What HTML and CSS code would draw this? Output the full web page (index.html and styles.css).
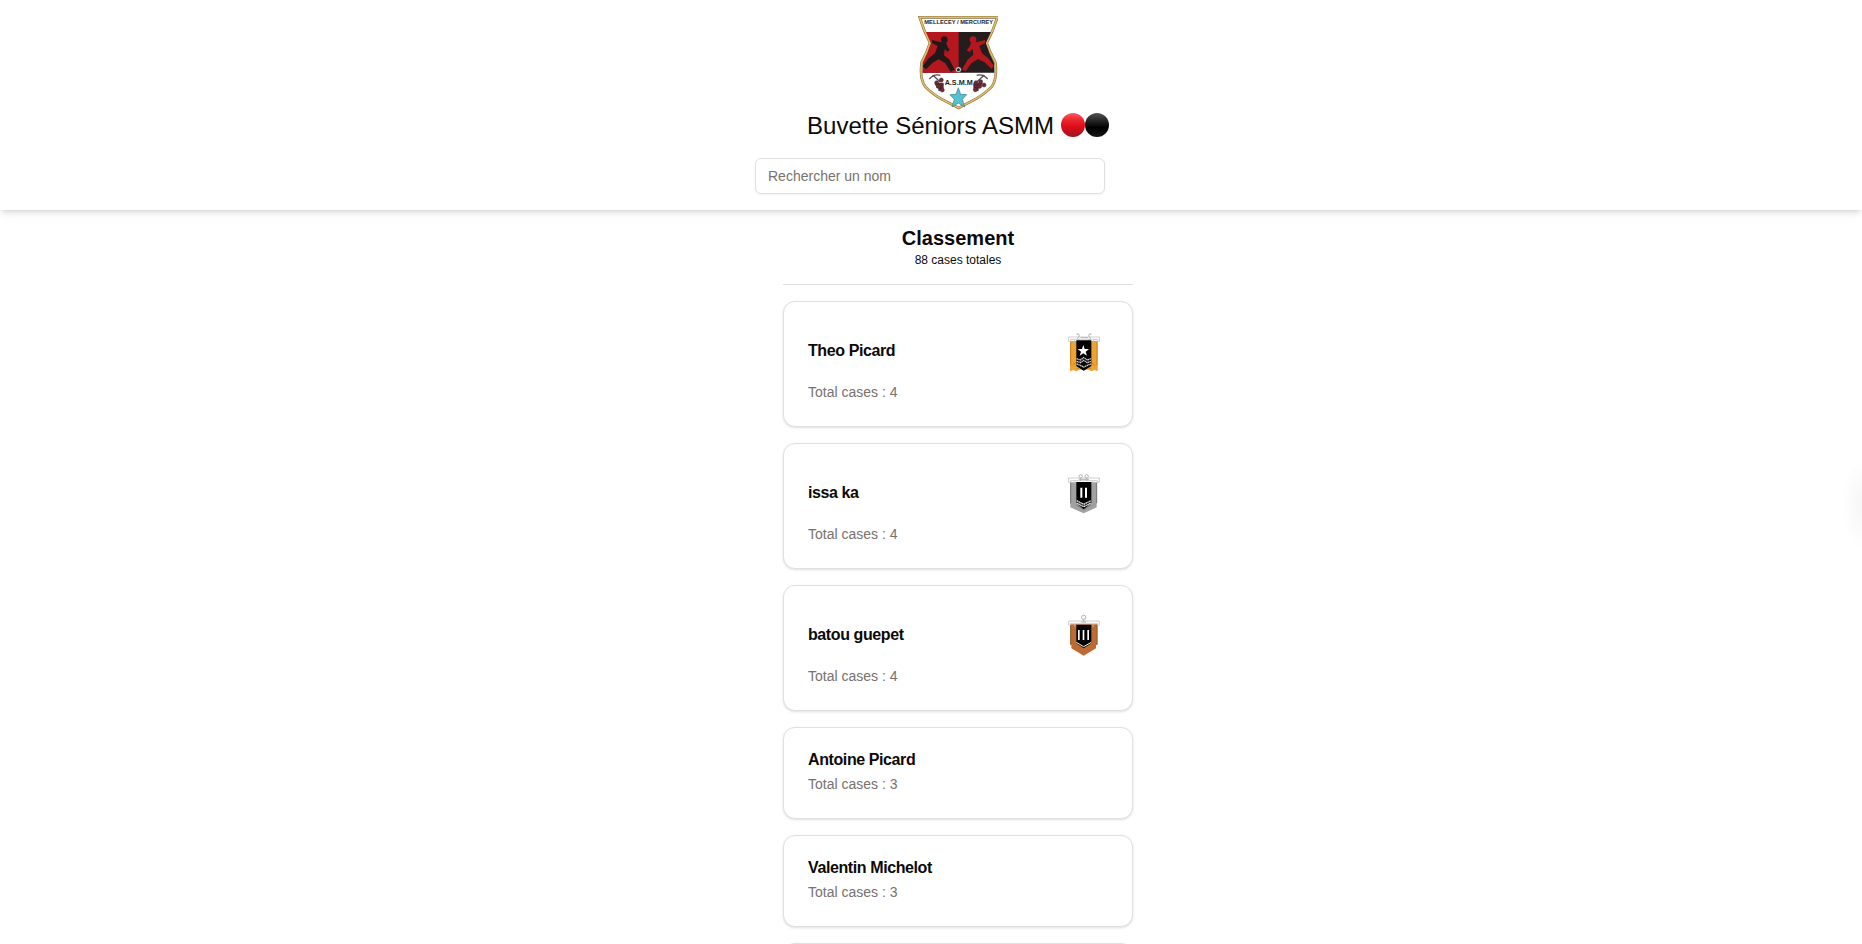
FILE: index.html
```
<!DOCTYPE html>
<html lang="fr">
<head>
<meta charset="utf-8">
<title>Buvette Séniors ASMM</title>
<link rel="stylesheet" href="styles.css">
</head>
<body>
<header class="header">
  <div class="brand">
    <svg class="crest" viewBox="24 18 240 282" role="img" aria-label="Logo ASMM">
      <path d="M29 22H262Q249 64 230 99Q240 128 256 157C260 185 256 213 246 229Q228 248 199 266L146 294 92 266Q63 248 45 229C34 213 31 185 35 157Q51 128 60 99Q42 64 29 22Z" fill="#fff" stroke="#8b7242" stroke-width="8"/>
      <path d="M42 66H248L228 99Q236 128 252 158L253 188H38L39 158Q54 128 63 99Z" fill="#241c1d"/>
      <path d="M42 66H146V188H38L39 158Q54 128 63 99Z" fill="#b5171e"/>
      <g fill="#211819">
        <circle cx="103" cy="89" r="10"/>
        <path d="M66 90L80 94 95 97 109 100 113 111 119 120 112 125 104 117 102 136 119 149 134 179 122 185 106 160 86 148 68 158 48 178 38 169 56 145 75 130 83 108 66 99Z"/>
      </g>
      <g fill="#b5171e">
        <circle cx="189" cy="89" r="10"/>
        <path d="M225 90L211 94 196 97 183 100 178 111 170 121 178 126 188 117 190 134 173 149 156 178 167 184 184 160 204 147 224 157 244 176 252 168 235 145 216 130 208 108 225 99Z"/>
      </g>
      <path d="M29 22H262Q249 64 230 99Q240 128 256 157C260 185 256 213 246 229Q228 248 199 266L146 294 92 266Q63 248 45 229C34 213 31 185 35 157Q51 128 60 99Q42 64 29 22Z" fill="none" stroke="#e2bd68" stroke-width="4.500"/>
      <circle cx="145" cy="179" r="9" fill="#ddd" stroke="#222" stroke-width="2"/>
      <path d="M145 174L150 178 148 184H142L140 178Z" fill="#222"/>
      <text x="146" y="42" class="crest-name" textLength="206" lengthAdjust="spacingAndGlyphs">MELLECEY / MERCUREY</text>
      <text x="146" y="226" class="crest-abbr" textLength="84" lengthAdjust="spacingAndGlyphs">A.S.M.M</text>
      <path d="M58 207Q72 191 91 196M68 195L90 215M233 207Q219 191 200 196M223 195L201 215" fill="none" stroke="#554d50" stroke-width="4"/>
      <g fill="#762837" stroke="#30262a" stroke-width="1.500">
        <path d="M76 219H100V226H76ZM80 226H100V234H80ZM86 234H99V242H86ZM191 219H215V226H191ZM191 226H211V234H191ZM192 234H205V242H192Z"/>
        <circle cx="80" cy="218" r="6"/><circle cx="94" cy="210" r="6"/><circle cx="97" cy="240" r="6"/><circle cx="86" cy="229" r="6"/>
        <circle cx="222" cy="225" r="6"/><circle cx="212" cy="215" r="6"/><circle cx="198" cy="218" r="6"/><circle cx="196" cy="239" r="6"/><circle cx="209" cy="229" r="6"/>
      </g>
      <path d="M145 233L152 253 170 254 157 268 164 291 145 279 126 291 133 268 120 254 138 253Z" fill="#54c3cf" stroke="#3b7680" stroke-width="2"/>
    </svg>
    <h1 class="title">Buvette Séniors ASMM
      <svg class="dots" viewBox="0 0 48 24" aria-hidden="true">
        <defs>
          <linearGradient id="red" x2="0" y2="1"><stop offset="0" stop-color="#ff5a60"/><stop offset=".3" stop-color="#e9252c"/><stop offset=".6" stop-color="#dc0b18"/><stop offset="1" stop-color="#9d1820"/></linearGradient>
          <linearGradient id="black" x2="0" y2="1"><stop offset="0" stop-color="#555"/><stop offset=".35" stop-color="#222"/><stop offset=".6" stop-color="#000"/><stop offset="1" stop-color="#171717"/></linearGradient>
        </defs>
        <circle cx="12" cy="12" r="12" fill="url(#red)"/><circle cx="36" cy="12" r="12" fill="url(#black)"/>
      </svg>
    </h1>
  </div>
  <input class="search" type="text" placeholder="Rechercher un nom">
</header>
<main class="ranking">
  <h2 class="heading">Classement</h2>
  <p class="total">88 cases totales</p>
  <hr class="rule">
  <section class="cards">
    <article class="card">
      <div class="row"><h3 class="name">Theo Picard</h3>
        <svg class="badge" viewBox="24 18 150 150" aria-hidden="true">
          <path d="M60 63H143V154L133 150 124 154 115 149H88L79 154 70 150 60 154Z" fill="#efa132"/>
          <path d="M62 66V136M141 66V136M68 137L80 125M135 137L123 125M80 146L91 141M123 146L111 141" fill="none" stroke="#c18428" stroke-width="3"/>
          <path d="M56 51H148V64H142V58H62V65H56Z" fill="#fff" stroke="#b8b8b8" stroke-width="2"/>
          <path d="M79 43l6-2 3 7-6 8 8 5M125 43l-6-2-3 7 6 8-8 5M92 53h22M73 61v9M131 61v9" fill="none" stroke="#b5b5b5" stroke-width="3"/>
          <path d="M79 61H124V138L101 152 79 138Z" fill="#000"/>
          <path d="M100 75L104 87 117 87 107 95 111 107 100 100 89 107 93 95 83 87 96 87Z" fill="#fff"/>
          <path d="M80 116L91 120 101 113 112 120 123 116M80 124L91 128 101 121 112 128 123 124M80 132L91 136 101 141 112 136 123 132" fill="none" stroke="#ddd" stroke-width="4" stroke-dasharray="4 1.500"/>
        </svg>
      </div><p class="cases">Total cases : 4</p>
    </article>
    <article class="card">
      <div class="row"><h3 class="name">issa ka</h3>
        <svg class="badge" viewBox="24 9 150 150" aria-hidden="true">
          <path d="M61 52H140V127L101 145 61 127Z" fill="#a1a1a1"/>
          <path d="M62 53V115M140 53V115M80 120L101 134 123 120" fill="none" stroke="#747474" stroke-width="3"/>
          <path d="M56 39H148V52H142V47H62V52H56Z" fill="#fff" stroke="#b5b5b5" stroke-width="2"/>
          <g fill="none" stroke="#b3b3b3" stroke-width="3"><circle cx="92" cy="34" r="5"/><circle cx="110" cy="34" r="5"/><path d="M92 39v9M110 39v9M86 43h31M75 49v8M128 49v8"/></g>
          <path d="M79 51H124V114L101 133 79 114Z" fill="#000"/>
          <path d="M91 68H97V98H91ZM105 68H111V98H105Z" fill="#fff"/>
          <path d="M80 107L101 118 123 107M80 114L101 125 123 114" fill="none" stroke="#e4e4e4" stroke-width="4" stroke-dasharray="5 1"/>
        </svg>
      </div><p class="cases">Total cases : 4</p>
    </article>
    <article class="card">
      <div class="row"><h3 class="name">batou guepet</h3>
        <svg class="badge" viewBox="24 15 150 150" aria-hidden="true">
          <path d="M61 58H142V120L138 121V130L101 152 64 130V121L61 120Z" fill="#bf6a32"/>
          <path d="M62 59V118M141 59V118" stroke="#846029" stroke-width="3"/>
          <path d="M56 48H148V60H142V55H62V60H56Z" fill="#fff" stroke="#b5b5b5" stroke-width="2"/>
          <g fill="none" stroke="#b3b3b3" stroke-width="3"><circle cx="101" cy="37" r="6.500"/><path d="M101 43v8M94 51h14M75 56v10M129 56v10"/></g>
          <path d="M79 59H124V115L101 130 79 115Z" fill="#000"/>
          <path d="M84 75H89V105H84ZM98 75H103V105H98ZM112 75H117V105H112Z" fill="#fff"/>
          <path d="M79 112L101 125 124 112" fill="none" stroke="#fff" stroke-width="3"/>
        </svg>
      </div><p class="cases">Total cases : 4</p>
    </article>
    <article class="card"><h3 class="name">Antoine Picard</h3><p class="cases">Total cases : 3</p></article>
    <article class="card"><h3 class="name">Valentin Michelot</h3><p class="cases">Total cases : 3</p></article>
    <article class="card"></article>
  </section>
</main>
</body>
</html>
```
FILE: styles.css
```
* { box-sizing: border-box; margin: 0; }
body {
  height: 944px;
  overflow: hidden;
  font-family: "Liberation Sans", Arial, sans-serif;
  color: #0c0a09;
  background: radial-gradient(ellipse 22px 46px at 1864px 504px, #f5f5f5, #fff) no-repeat #fff;
}
.header {
  height: 210px;
  padding: 16px 0;
  display: flex;
  flex-direction: column;
  gap: 16px;
  background: #fff;
  box-shadow: 0 4px 6px -1px rgb(0 0 0 / .1), 0 2px 4px -2px rgb(0 0 0 / .1), 0 10px 15px -3px rgb(0 0 0 / .02);
}
.brand { display: flex; flex-direction: column; align-items: center; margin-left: 54px; }
.crest { display: block; width: 80px; height: 94px; }
.crest-name, .crest-abbr { font-weight: 700; text-anchor: middle; fill: #222; }
.crest-name { font-size: 18px; }
.crest-abbr { font-size: 20px; }
.title { display: flex; align-items: center; gap: 7px; font-size: 24px; line-height: 32px; font-weight: 400; }
.dots { width: 48px; height: 24px; margin-bottom: 2px; }
.search {
  width: 350px;
  height: 36px;
  margin-left: 755px;
  padding: 4px 12px;
  font: 14px/20px "Liberation Sans", Arial, sans-serif;
  border: 1px solid #e1e0df;
  border-radius: 6px;
  background: #fff;
  box-shadow: 0 1px 2px rgb(0 0 0 / .05);
}
.search::placeholder { color: #78716c; opacity: 1; }
.ranking { width: 350px; margin-left: 783px; padding-top: 16px; }
.heading { font-size: 20px; line-height: 24px; text-align: center; }
.total { margin-top: 2px; font-size: 12px; line-height: 16px; text-align: center; }
.rule { height: 1px; margin: 16px 0; border: 0; background: #e1e0df; }
.cards { display: flex; flex-direction: column; gap: 16px; }
.card {
  display: flex;
  flex-direction: column;
  gap: 6px;
  min-height: 92px;
  padding: 24px;
  border: 1px solid #e1e0df;
  border-radius: 12px;
  background: #fff;
  box-shadow: 0 1px 3px rgb(0 0 0 / .1), 0 1px 2px -1px rgb(0 0 0 / .1);
}
.row { display: flex; align-items: center; justify-content: space-between; }
.name { font-size: 16px; line-height: 16px; letter-spacing: -.025em; }
.badge { display: block; width: 50px; height: 50px; }
.cases { font-size: 14px; line-height: 20px; color: #78716c; }
```
